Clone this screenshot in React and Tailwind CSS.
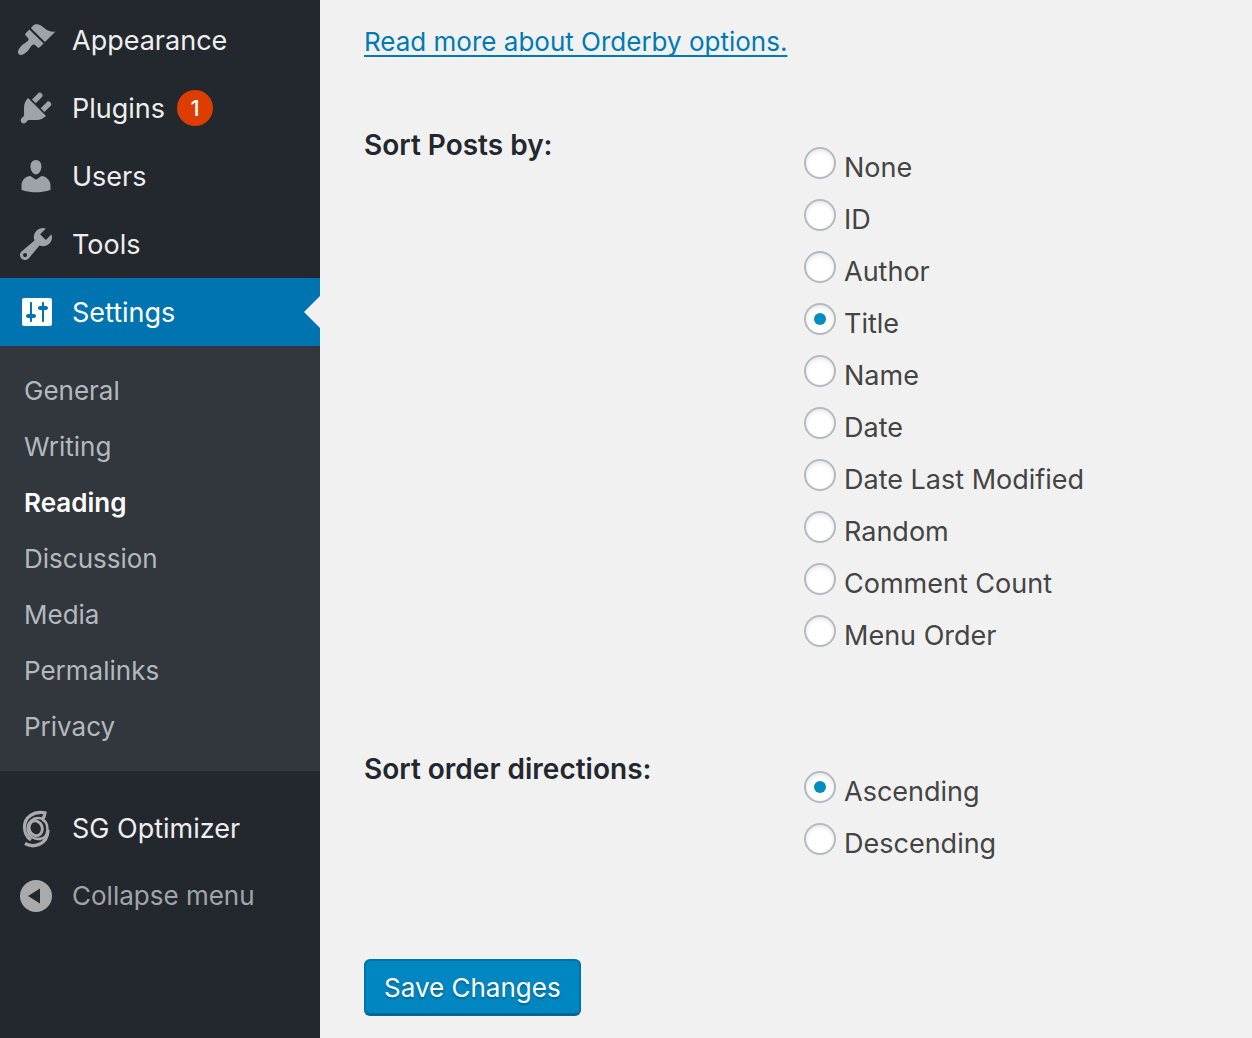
import React, { useState } from 'react';

const menuItems = [
  {
    name: 'Appearance',
    path: 'M14.48 11.06L7.41 3.99l1.5-1.5c.5-.56 2.3-.47 3.51.32 1.21.8 1.43 1.28 2.91 2.1 1.18.64 2.45 1.26 4.45.85zm-.71.71L6.7 4.7 4.93 6.47c-.39.39-.39 1.02 0 1.41l1.06 1.06c.39.39.39 1.03 0 1.42-.6.6-1.43 1.11-2.21 1.69-.35.26-.7.53-1.01.84C1.43 14.23.4 16.08 1.4 17.07c.99 1 2.84-.03 4.18-1.36.31-.31.58-.66.85-1.02.57-.78 1.08-1.61 1.69-2.21.39-.39 1.02-.39 1.41 0l1.06 1.06c.39.39 1.02.39 1.41 0z',
  },
  {
    name: 'Plugins',
    count: 1,
    path: 'M13.11 4.36L9.87 7.6 8 5.73l3.24-3.24c.35-.34 1.05-.2 1.56.32.52.51.66 1.21.31 1.55zm-8 1.77l.91-1.12 9.01 9.01-1.19.84c-.71.71-2.63 1.16-3.82 1.16H6.14L4.9 17.26c-.59.59-1.54.59-2.12 0-.59-.58-.59-1.53 0-2.12l1.24-1.24v-3.88c0-1.13.4-3.19 1.09-3.89zm7.26 3.97l3.24-3.24c.34-.35 1.04-.21 1.55.31.52.51.66 1.21.31 1.55l-3.24 3.25z',
  },
  {
    name: 'Users',
    path: 'M10 9.25c-2.27 0-2.73-3.44-2.73-3.44C7 4.02 7.82 2 9.97 2c2.16 0 2.98 2.02 2.71 3.81 0 0-.41 3.44-2.68 3.44zm0 2.57L12.72 10c2.39 0 4.52 2.33 4.52 4.53v2.49s-3.65 1.13-7.24 1.13c-3.65 0-7.24-1.13-7.24-1.13v-2.49c0-2.25 1.94-4.48 4.47-4.48z',
  },
  {
    name: 'Tools',
    path: 'M16.68 9.77c-1.34 1.34-3.3 1.67-4.95.99l-5.41 6.52c-.99.99-2.59.99-3.58 0s-.99-2.59 0-3.57l6.52-5.42c-.68-1.65-.35-3.61.99-4.95 1.28-1.28 3.12-1.62 4.72-1.06l-2.89 2.89 2.82 2.82 2.86-2.87c.53 1.58.18 3.39-1.08 4.65zM3.81 16.21c.4.39 1.04.39 1.43 0 .4-.4.4-1.04 0-1.43-.39-.4-1.03-.4-1.43 0-.39.39-.39 1.03 0 1.43z',
  },
  {
    name: 'Settings',
    current: true,
    path: 'M18 16V4c0-.55-.45-1-1-1H4c-.55 0-1 .45-1 1v12c0 .55.45 1 1 1h13c.55 0 1-.45 1-1zM8 11h1c.55 0 1 .45 1 1s-.45 1-1 1H8v1.5c0 .28-.22.5-.5.5s-.5-.22-.5-.5V13H6c-.55 0-1-.45-1-1s.45-1 1-1h1V5.5c0-.28.22-.5.5-.5s.5.22.5.5V11zm5-2h-1c-.55 0-1-.45-1-1s.45-1 1-1h1V5.5c0-.28.22-.5.5-.5s.5.22.5.5V7h1c.55 0 1 .45 1 1s-.45 1-1 1h-1v5.5c0 .28-.22.5-.5.5s-.5-.22-.5-.5V9z',
  },
];

const subItems = ['General', 'Writing', 'Reading', 'Discussion', 'Media', 'Permalinks', 'Privacy'];

const sortOptions = [
  'None',
  'ID',
  'Author',
  'Title',
  'Name',
  'Date',
  'Date Last Modified',
  'Random',
  'Comment Count',
  'Menu Order',
];

const directions = ['Ascending', 'Descending'];

const MenuItem = ({ item }) => (
  <li>
    <a
      href="#"
      className={
        item.current
          ? 'relative flex h-[68px] items-center gap-4 bg-[#0074b1] pl-4 text-white'
          : 'flex h-[68px] items-center gap-4 pl-4 text-[#eeeeee]'
      }
    >
      <svg
        viewBox="0 0 20 20"
        className={item.current ? 'size-10 fill-white' : 'size-10 fill-[#9ea3a9]'}
        aria-hidden="true"
      >
        <path d={item.path} />
      </svg>
      <span className="pt-[2px]">{item.name}</span>
      {item.count && (
        <span className="-ml-1 flex size-9 items-center justify-center rounded-full bg-[#dd3d00] text-[22px] font-medium text-white">
          {item.count}
        </span>
      )}
      {/* Notch pointing at the content */}
      {item.current && (
        <span className="absolute right-0 top-1/2 -translate-y-1/2 border-y-16 border-r-16 border-y-transparent border-r-[#f1f1f1]" />
      )}
    </a>
  </li>
);

const Sidebar = () => (
  <nav className="w-80 shrink-0 bg-[#23282f] pt-[6px]">
    <ul>
      {menuItems.map((item) => (
        <MenuItem key={item.name} item={item} />
      ))}
    </ul>

    {/* Settings submenu */}
    <ul className="bg-[#32373e] pb-[17px] pt-4 text-[26px]">
      {subItems.map((name) => (
        <li key={name}>
          <a
            href="#"
            className={
              name === 'Reading'
                ? 'flex h-14 items-center pl-6 font-semibold text-white'
                : 'flex h-14 items-center pl-6 text-[#b4b9be]'
            }
          >
            {name}
          </a>
        </li>
      ))}
    </ul>

    <a href="#" className="mt-[23px] flex h-[68px] items-center gap-4 pl-4 text-[#eeeeee]">
      <svg viewBox="0 0 40 40" className="size-10 fill-none stroke-[#a9abad]" aria-hidden="true">
        <path d="M15 32C10.500 29 8.500 24.500 8.500 19 8.500 9 18 2.800 29 4.800c-.2 2.500-1 4.500-2.500 6.200" strokeWidth="3.2" />
        <path
          d="M27 11c-4-1.500-9-1-12 2-3 3-4 6-3 10 1 5 5 8 10 8 6 0 9.500-4 9.500-9.500C31.500 17 30 13 26 11.500"
          strokeWidth="2.5"
        />
        <ellipse cx="19.700" cy="20.300" rx="6.500" ry="7.500" strokeWidth="2.900" transform="rotate(-20 19.700 20.300)" />
        <path d="M9 35.500c9.500 5 22.500 1 23-13.500" strokeWidth="3.4" />
      </svg>
      <span className="pt-[2px]">SG Optimizer</span>
    </a>
    <button
      type="button"
      className="flex h-[68px] w-full items-center gap-4 pl-4 text-[26px] text-[#a0a5aa]"
    >
      <svg viewBox="0 0 40 40" className="size-10" aria-hidden="true">
        <circle cx="20" cy="20" r="16" fill="#aaaaaa" />
        <path d="M12 20l12-7.500v15z" fill="#23282f" />
      </svg>
      <span className="pb-[2px]">Collapse menu</span>
    </button>
  </nav>
);

const RadioSetting = ({ id, title, options, value, onChange }) => (
  <div role="radiogroup" aria-labelledby={id} className="grid grid-cols-[440px_1fr]">
    <h2 id={id} className="text-[28px] font-semibold leading-9 text-[#23282f]">
      {title}
    </h2>
    <div className="pt-[15px]">
      {options.map((option) => (
        <label key={option} className="flex h-13 items-center gap-2">
          <input
            type="radio"
            name={id}
            checked={value === option}
            onChange={() => onChange(option)}
            className="mb-[10px] flex size-8 appearance-none items-center justify-center rounded-full border-2 border-[#b4b9be] bg-white shadow-[inset_0_2px_4px_rgba(0,0,0,0.1)] before:size-3 before:rounded-full checked:before:bg-[#008ec2]"
          />
          {option}
        </label>
      ))}
    </div>
  </div>
);

const App = () => {
  const [orderby, setOrderby] = useState('Title');
  const [direction, setDirection] = useState('Ascending');

  return (
    <div className="flex min-h-screen bg-[#f1f1f1] font-['Inter',sans-serif] text-[27px] text-[#444444]">
      <Sidebar />
      <main className="grow px-11 pt-6">
        <a
          href="#"
          className="block w-fit text-[26px] leading-9 text-[#007ab3] underline decoration-2 underline-offset-4 [text-decoration-skip-ink:none]"
        >
          Read more about Orderby options.
        </a>
        <form className="mt-[67px] space-y-[89px]" onSubmit={(e) => e.preventDefault()}>
          <RadioSetting
            id="orderby"
            title="Sort Posts by:"
            options={sortOptions}
            value={orderby}
            onChange={setOrderby}
          />
          <RadioSetting
            id="direction"
            title="Sort order directions:"
            options={directions}
            value={direction}
            onChange={setDirection}
          />
          <button
            type="submit"
            className="h-14 rounded-md border-2 border-[#0073aa] border-b-[#006799] bg-[#0086c0] px-[18px] text-[26px] text-white shadow-[0_1px_0_#006799] text-shadow-[0_2px_2px_#006799]"
          >
            Save Changes
          </button>
        </form>
      </main>
    </div>
  );
};

export default App;
